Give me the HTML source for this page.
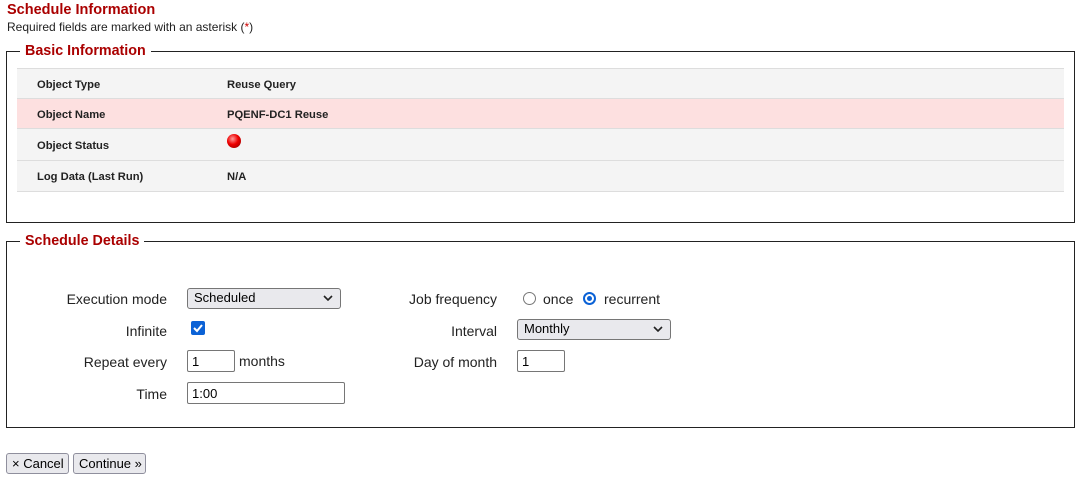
<!DOCTYPE html>
<html><head><style>
body{margin:0;width:1090px;height:487px;background:#fff;font-family:"Liberation Sans",Arial,sans-serif;position:relative;overflow:hidden}
.a{position:absolute;white-space:nowrap}
.fs{position:absolute;left:6px;width:1067px;border:1px solid #222}
.lg{position:absolute;left:13px;top:-9px;background:#fff;padding:0 5px;color:#a00;font-weight:bold;font-size:14.3px}
.row{position:absolute;left:17px;width:1047px;border-top:1px solid #ddd;background:#f4f4f4;font-size:11.2px;font-weight:bold;color:#222}
.row span{position:absolute;white-space:nowrap}
.lbl{font-size:14px;color:#222;text-align:right;width:160px}
.sel{position:absolute;height:19px;border:1px solid #767676;border-radius:3px;background:#e9e9ed;font-size:13px;box-sizing:border-box;padding:1px 6px}
.sel svg{position:absolute;right:7px;top:6px}
.inp{position:absolute;height:22px;border:1px solid #767676;border-radius:2px;box-sizing:border-box;font-size:13px;padding:3px 4px}
.btn{position:absolute;top:453px;height:21px;border:1px solid #8f8f9d;border-radius:3px;background:#e9e9ed;font-size:13px;box-sizing:border-box;padding:2px 5px;white-space:nowrap}
</style></head><body>
<div class="a" style="left:7px;top:2px;font-size:14.5px;font-weight:bold;color:#a00">Schedule Information</div>
<div class="a" style="left:7px;top:20px;font-size:12px;color:#222">Required fields are marked with an asterisk (<span style="color:#c00">*</span>)</div>

<div class="fs" style="top:51px;height:170px"><div class="lg">Basic Information</div></div>
<div class="row" style="top:68px;height:30px"><span style="left:20px;top:10px">Object Type</span><span style="left:210px;top:10px">Reuse Query</span></div>
<div class="row" style="top:98px;height:30px;background:#fde0e0"><span style="left:20px;top:10px">Object Name</span><span style="left:210px;top:10px">PQENF-DC1 Reuse</span></div>
<div class="row" style="top:128px;height:32px"><span style="left:20px;top:11px">Object Status</span><span style="left:210px;top:5px;width:14px;height:14px;border-radius:50%;background:radial-gradient(circle at 40% 35%,#ff9a9a,#e00 45%,#800 100%)"></span></div>
<div class="row" style="top:160px;height:30px;border-bottom:1px solid #ddd"><span style="left:20px;top:10px">Log Data (Last Run)</span><span style="left:210px;top:10px">N/A</span></div>

<div class="fs" style="top:241px;height:185px"><div class="lg">Schedule Details</div></div>
<div class="a lbl" style="left:7px;top:291px">Execution mode</div>
<div class="sel" style="left:187px;top:288px;width:154px;height:21px">Scheduled<svg width="10" height="6"><path d="M1 1l4 4 4-4" stroke="#222" stroke-width="1.6" fill="none"/></svg></div>
<div class="a lbl" style="left:7px;top:323px">Infinite</div>
<div class="a" style="left:191px;top:321px;width:14px;height:14px;background:#0b62d6;border-radius:2px"><svg width="14" height="14"><path d="M3 7l3 3 5-6" stroke="#fff" stroke-width="2" fill="none"/></svg></div>
<div class="a lbl" style="left:7px;top:354px">Repeat every</div>
<div class="inp" style="left:187px;top:350px;width:48px">1</div>
<div class="a" style="left:239px;top:353px;font-size:14px;color:#222">months</div>
<div class="a lbl" style="left:7px;top:386px">Time</div>
<div class="inp" style="left:187px;top:382px;width:158px">1:00</div>

<div class="a lbl" style="left:337px;top:291px">Job frequency</div>
<div class="a" style="left:523px;top:292px;width:11px;height:11px;border:1px solid #777;border-radius:50%"></div>
<div class="a" style="left:543px;top:291px;font-size:14px;color:#222">once</div>
<div class="a" style="left:583px;top:292px;width:9px;height:9px;border:2px solid #0b62d6;border-radius:50%"><div style="margin:2px;width:5px;height:5px;border-radius:50%;background:#0b62d6"></div></div>
<div class="a" style="left:604px;top:291px;font-size:14px;color:#222">recurrent</div>
<div class="a lbl" style="left:337px;top:323px">Interval</div>
<div class="sel" style="left:517px;top:319px;width:154px;height:21px">Monthly<svg width="10" height="6"><path d="M1 1l4 4 4-4" stroke="#222" stroke-width="1.6" fill="none"/></svg></div>
<div class="a lbl" style="left:337px;top:354px">Day of month</div>
<div class="inp" style="left:517px;top:350px;width:48px">1</div>

<div class="btn" style="left:6px;width:63px">× Cancel</div>
<div class="btn" style="left:73px;width:73px">Continue »</div>
</body></html>
